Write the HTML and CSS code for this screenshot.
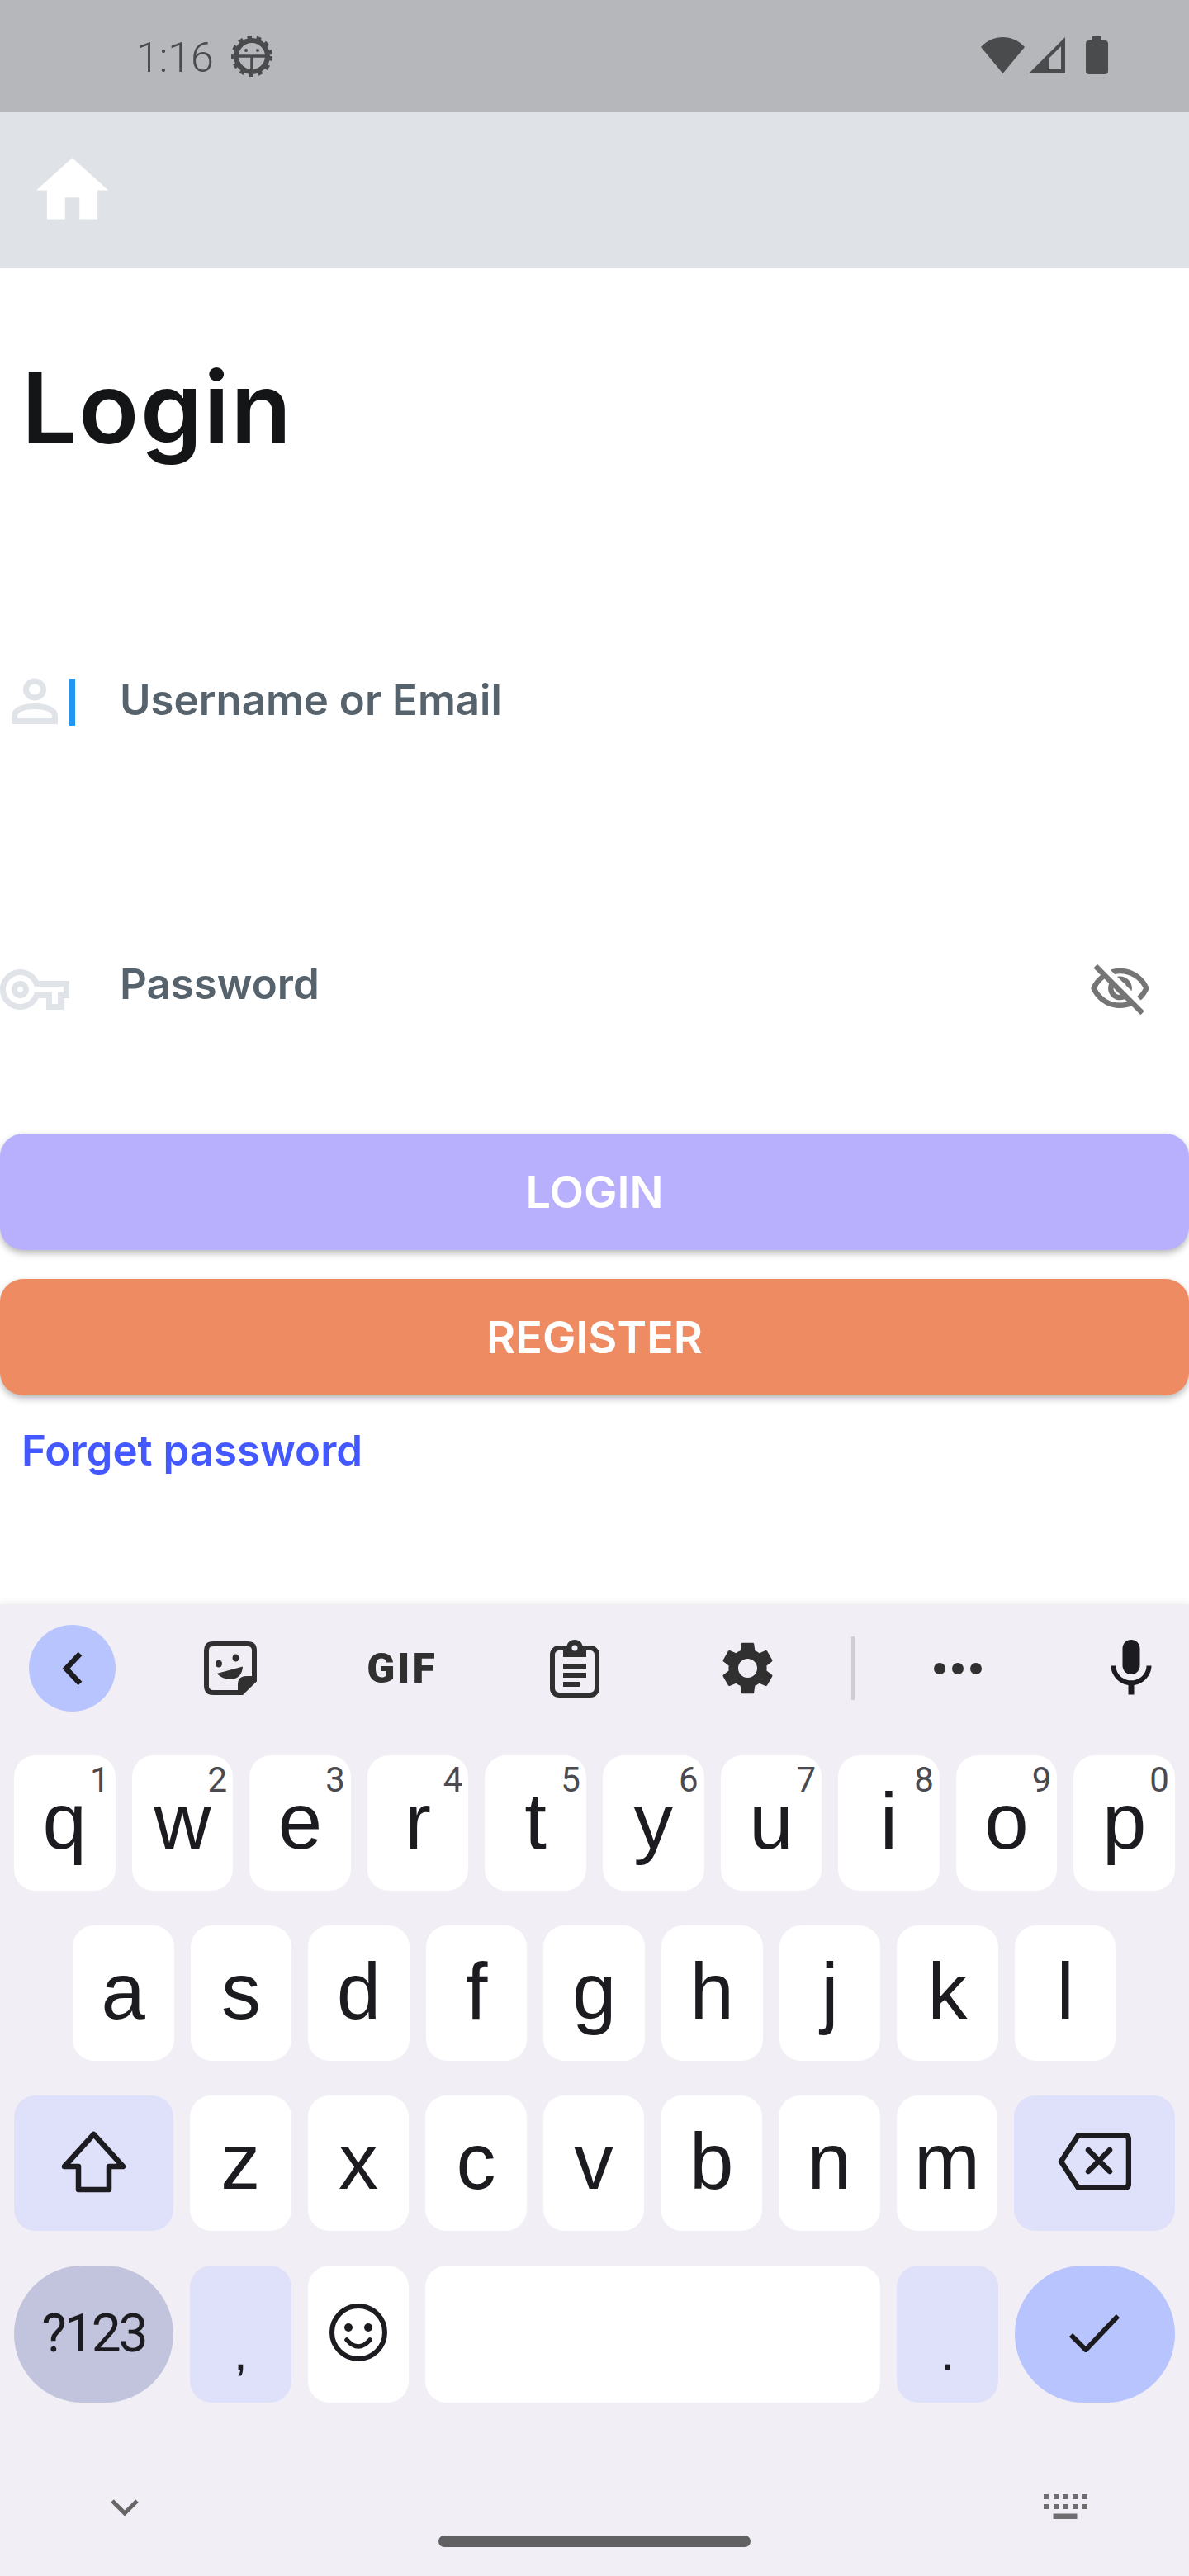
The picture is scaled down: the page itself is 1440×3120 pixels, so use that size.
FILE: index.html
```html
<!DOCTYPE html>
<html lang="en">
<head>
  <meta charset="UTF-8" />
  <meta name="viewport" content="width=device-width, initial-scale=1.0">
  <title>Login</title>
  <link rel="stylesheet" href="styles.css">
</head>
<body>

<!-- Barre d'etat -->
<div class="status-bar">
  <span class="status-time">1:16</span>
  <svg class="status-bug" width="50" height="50" viewBox="0 0 50 50">
    <circle cx="25" cy="25" r="19" fill="none" stroke="#4a4b4d" stroke-width="6"/>
    <circle cx="25" cy="25" r="22.5" fill="none" stroke="#4a4b4d" stroke-width="5" stroke-dasharray="5.5 5.6"/>
    <path d="M5 25H45M25 25V44" fill="none" stroke="#4a4b4d" stroke-width="3.5"/>
    <circle cx="18" cy="18" r="2" fill="#4a4b4d"/>
    <circle cx="32" cy="18" r="2" fill="#4a4b4d"/>
  </svg>
  <div class="status-icons">
    <svg width="53" height="44" viewBox="0 0 53 44"><path d="M0 12C14-4 39-4 53 12L26.5 44Z" fill="#4a4b4d"/></svg>
    <svg width="44" height="44" viewBox="0 0 44 44"><path fill-rule="evenodd" d="M44 0V44H0ZM39 11 24 26V39H39Z" fill="#4a4b4d"/></svg>
    <svg class="status-battery" width="27" height="46" viewBox="0 0 27 46"><path d="M8 0H19V5H23Q27 5 27 9V42Q27 46 23 46H4Q0 46 0 42V9Q0 5 4 5H8Z" fill="#4a4b4d"/></svg>
  </div>
</div>

<header class="app-header">
  <svg width="105" height="105" viewBox="0 0 24 24"><path d="M10 20v-6h4v6h5v-8h3L12 3 2 12h3v8z" fill="#fff"/></svg>
</header>

<main class="login">
  <h1 class="login-title">Login</h1>

  <div class="field field-user">
    <div class="field-slot">
      <svg width="56" height="56" viewBox="0 0 56 56" fill="none" stroke="#e0e3e7" stroke-width="7">
        <ellipse cx="28" cy="14" rx="10.5" ry="10"/>
        <path d="M3.5 52.5V46C3.5 38 16 34.500 28 34.500S52.500 38 52.500 46V52.500Z"/>
      </svg>
      <span class="cursor"></span>
    </div>
    <span class="field-label">Username or Email</span>
  </div>

  <div class="field field-pass">
    <div class="field-slot">
      <svg class="key-icon" width="84" height="49" viewBox="0 5 24 14"><path fill="#e0e3e7" d="M22 19h-6v-4h-2.680c-1.140 2.420-3.600 4-6.320 4-3.860 0-7-3.140-7-7s3.140-7 7-7c2.720 0 5.170 1.580 6.320 4H24v6h-2v4zm-4-2h2v-4h2v-2H11.940l-.23-.67C11.010 8.340 9.110 7 7 7c-2.760 0-5 2.240-5 5s2.240 5 5 5c2.110 0 4.010-1.340 4.710-3.330l.23-.67H18v4zM7 15c-1.650 0-3-1.350-3-3s1.350-3 3-3 3 1.350 3 3-1.350 3-3 3zm0-4c-.55 0-1 .45-1 1s.45 1 1 1 1-.45 1-1-.45-1-1-1z"/></svg>
    </div>
    <span class="field-label">Password</span>
    <svg class="eye-icon" width="77" height="77" viewBox="0 0 24 24"><path fill="#757575" d="M12 6c3.790 0 7.170 2.130 8.820 5.500-.59 1.220-1.420 2.270-2.410 3.120l1.410 1.410c1.390-1.230 2.490-2.770 3.180-4.530C21.270 7.110 17 4 12 4c-1.270 0-2.490.2-3.640.57l1.650 1.650C10.660 6.090 11.320 6 12 6zm-1.070 1.140L13 9.210c.57.25 1.030.71 1.280 1.280l2.070 2.070c.08-.34.14-.7.14-1.070C16.500 9.010 14.480 7 12 7c-.37 0-.72.05-1.070.14zM2.010 3.870l2.680 2.680C3.060 7.830 1.770 9.530 1 11.500 2.730 15.890 7 19 12 19c1.520 0 2.980-.29 4.320-.82l3.420 3.420 1.410-1.410L3.420 2.450 2.010 3.870zm7.500 7.500l2.610 2.610c-.04.01-.08.02-.12.02-1.380 0-2.500-1.120-2.500-2.500 0-.05.01-.08.01-.13zm-3.400-3.400l1.750 1.750c-.23.55-.36 1.150-.36 1.780 0 2.480 2.020 4.500 4.500 4.500.63 0 1.230-.13 1.770-.36l.98.98c-.88.24-1.800.38-2.750.38-3.790 0-7.170-2.130-8.820-5.500.7-1.430 1.720-2.610 2.930-3.530z"/></svg>
  </div>

  <button class="btn btn-login">LOGIN</button>
  <button class="btn btn-register">REGISTER</button>
  <a class="forget-link">Forget password</a>
</main>

<!-- Clavier -->
<section class="keyboard">
  <div class="toolbar">
    <span class="tool-back">
      <svg width="26" height="42" viewBox="0 0 26 42"><path d="M23 3 6 21 23 39" fill="none" stroke="#1c1b1f" stroke-width="6.500"/></svg>
    </span>
    <svg width="64" height="65" viewBox="0 0 64 65">
      <path d="M11 3H53Q61 3 61 11V47L45 62H11Q3 62 3 54V11Q3 3 11 3Z" fill="none" stroke="#303030" stroke-width="6"/>
      <path d="M41 63V52Q41 42 52 42H64V48L47 65Z" fill="#303030"/>
      <ellipse cx="18" cy="27" rx="4" ry="4.500" fill="#303030"/>
      <ellipse cx="38.500" cy="20" rx="4" ry="4.500" fill="#303030"/>
      <path d="M15.500 39 47 30.500Q46 46 31 46 23 46 15.500 39Z" fill="#303030"/>
    </svg>
    <span class="tool-gif">GIF</span>
    <svg width="60" height="70" viewBox="0 0 60 70">
      <rect x="3" y="10" width="54" height="57" rx="8" fill="none" stroke="#303030" stroke-width="6"/>
      <path d="M16 7H20.500A10 10 0 0 1 39.500 7H44V21H16Z" fill="#303030"/>
      <circle cx="30" cy="10" r="3.500" fill="#f1eff5"/>
      <path d="M16 29H44V35H16ZM16 40H44V46H16ZM16 51H36V57H16Z" fill="#303030"/>
    </svg>
    <svg width="77" height="77" viewBox="0 0 24 24"><path fill="#303030" d="M19.140 12.940c.04-.3.06-.61.06-.94 0-.32-.02-.64-.07-.94l2.030-1.580c.18-.14.23-.41.12-.61l-1.920-3.320c-.12-.22-.37-.29-.59-.22l-2.390.96c-.5-.38-1.030-.7-1.620-.94l-.36-2.540c-.04-.24-.24-.41-.48-.41h-3.840c-.24 0-.43.17-.47.41l-.36 2.540c-.59.24-1.130.57-1.620.94l-2.390-.96c-.22-.08-.47 0-.59.22L2.740 8.870c-.12.21-.08.47.12.61l2.030 1.580c-.05.3-.09.63-.09.94s.02.64.07.94l-2.030 1.580c-.18.14-.23.41-.12.61l1.920 3.320c.12.22.37.29.59.22l2.390-.96c.5.38 1.030.7 1.620.94l.36 2.540c.05.24.24.41.48.41h3.840c.24 0 .44-.17.47-.41l.36-2.540c.59-.24 1.130-.56 1.620-.94l2.390.96c.22.08.47 0 .59-.22l1.920-3.320c.12-.22.07-.47-.12-.61l-2.010-1.580zM12 15.600c-1.980 0-3.600-1.620-3.600-3.600s1.620-3.600 3.600-3.600 3.600 1.620 3.600 3.600-1.620 3.600-3.600 3.600z"/></svg>
    <span class="tool-divider"></span>
    <svg width="58" height="14" viewBox="0 0 58 14" fill="#303030"><circle cx="7" cy="7" r="7"/><circle cx="29" cy="7" r="7"/><circle cx="51" cy="7" r="7"/></svg>
    <svg class="tool-mic" width="84" height="84" viewBox="0 0 24 24"><path fill="#1c1b1f" d="M12 14c1.660 0 3-1.340 3-3V5c0-1.660-1.340-3-3-3S9 3.340 9 5v6c0 1.660 1.340 3 3 3zm5.300-3c0 3-2.540 5.100-5.300 5.100S6.700 14 6.700 11H5c0 3.410 2.720 6.230 6 6.720V21h2v-3.280c3.280-.48 6-3.300 6-6.720h-1.700z"/></svg>
  </div>

  <div class="key-row">
    <div class="key">q<sup class="key-num">1</sup></div>
    <div class="key">w<sup class="key-num">2</sup></div>
    <div class="key">e<sup class="key-num">3</sup></div>
    <div class="key">r<sup class="key-num">4</sup></div>
    <div class="key">t<sup class="key-num">5</sup></div>
    <div class="key">y<sup class="key-num">6</sup></div>
    <div class="key">u<sup class="key-num">7</sup></div>
    <div class="key">i<sup class="key-num">8</sup></div>
    <div class="key">o<sup class="key-num">9</sup></div>
    <div class="key">p<sup class="key-num">0</sup></div>
  </div>

  <div class="key-row key-row-home">
    <div class="key">a</div>
    <div class="key">s</div>
    <div class="key">d</div>
    <div class="key">f</div>
    <div class="key">g</div>
    <div class="key">h</div>
    <div class="key">j</div>
    <div class="key">k</div>
    <div class="key">l</div>
  </div>

  <div class="key-row">
    <div class="key key-wide key-soft">
      <svg width="79" height="76" viewBox="0 0 79 76"><path d="M39.500 5 75 44H58V72H21V44H4Z" fill="none" stroke="#1c1b1f" stroke-width="6.500" stroke-linejoin="round"/></svg>
    </div>
    <div class="key">z</div>
    <div class="key">x</div>
    <div class="key">c</div>
    <div class="key">v</div>
    <div class="key">b</div>
    <div class="key">n</div>
    <div class="key">m</div>
    <div class="key key-fill key-soft">
      <svg width="89" height="70" viewBox="0 0 89 70" fill="none" stroke="#1c1b1f" stroke-width="6.500" stroke-linejoin="round" stroke-linecap="round">
        <path d="M25 3H80Q86 3 86 9V61Q86 67 80 67H25L4 35Z"/>
        <path d="M37 21 63 47M63 21 37 47"/>
      </svg>
    </div>
  </div>

  <div class="key-row key-row-last">
    <div class="key key-wide key-pill key-symbols">?123</div>
    <div class="key key-soft key-punct">,</div>
    <div class="key">
      <svg width="70" height="70" viewBox="0 0 70 70">
        <circle cx="35" cy="35" r="32" fill="none" stroke="#1c1b1f" stroke-width="6"/>
        <circle cx="23" cy="29" r="5" fill="#1c1b1f"/>
        <circle cx="47" cy="29" r="5" fill="#1c1b1f"/>
        <path d="M21 44Q35 60 49 44" fill="none" stroke="#1c1b1f" stroke-width="5.500" stroke-linecap="round"/>
      </svg>
    </div>
    <div class="key key-space"></div>
    <div class="key key-soft key-punct">.</div>
    <div class="key key-fill key-pill key-enter">
      <svg width="61" height="47" viewBox="0 0 61 47"><path d="M2 26 20 44 59 3" fill="none" stroke="#1c1b1f" stroke-width="6"/></svg>
    </div>
  </div>

  <div class="nav-row">
    <svg class="nav-down" width="34" height="20" viewBox="0 0 34 20"><path d="M2 2 17 17 32 2" fill="none" stroke="#666" stroke-width="5"/></svg>
    <svg width="53" height="30" viewBox="0 0 53 30" fill="#6e6e70">
      <path d="M0 0h6v6H0zM12 0h6v6h-6zM23.500 0h6v6h-6zM35 0h6v6h-6zM47 0h6v6h-6z"/>
      <path d="M0 12h6v6H0zM12 12h6v6h-6zM23.500 12h6v6h-6zM35 12h6v6h-6zM47 12h6v6h-6z"/>
      <path d="M11.500 23.500h29V30h-29z"/>
    </svg>
  </div>
  <div class="home-bar"></div>
</section>

</body>
</html>
```

FILE: styles.css
```css
* {
  box-sizing: border-box;
}

body {
  margin: 0;
  width: 1440px;
  height: 3120px;
  display: flex;
  flex-direction: column;
  background: #fff;
  font-family: Inter, 'Noto Sans', sans-serif;
  overflow: hidden;
}

/* status bar */
.status-bar {
  flex: 0 0 136px;
  display: flex;
  align-items: center;
  padding: 0 98px 0 165px;
  background: #b6b7ba;
  color: #4a4b4d;
}

.status-time {
  width: 115px;
  margin-top: 4px;
  font-family: Roboto, sans-serif;
  font-size: 50px;
  font-weight: 300;
}

.status-icons {
  display: flex;
  align-items: center;
  gap: 5px;
  margin-left: auto;
  margin-top: -2px;
}

.status-battery {
  margin-left: 20px;
}

.app-header {
  flex: 0 0 188px;
  display: flex;
  align-items: center;
  padding-left: 35px;
  background: #dfe2e6;
}

/* form */
.login {
  flex: 1;
  display: flex;
  flex-direction: column;
  padding-top: 110px;
}

.login-title {
  height: 120px;
  margin: 0 0 0 26px;
  font-size: 120px;
  font-weight: 600;
  line-height: 1;
  letter-spacing: 1.500px;
  color: #131517;
}

.field {
  display: flex;
  align-items: flex-start;
}

.field-user {
  height: 339px;
  margin-top: 267px;
}

.field-pass {
  height: 213px;
}

.field-slot {
  flex: 0 0 145px;
  display: flex;
  padding-left: 14px;
}

.cursor {
  width: 7px;
  height: 57px;
  margin: 1px 0 0 14px;
  background: #2196f3;
}

.key-icon {
  margin: 14px 0 0 -14px;
}

.field-label {
  margin-top: 3px;
  font-size: 51px;
  font-weight: 600;
  line-height: 48px;
  color: #56636d;
}

.field-pass .field-label {
  margin-top: 8px;
}

.eye-icon {
  margin-left: auto;
  margin-right: 45px;
}

.btn {
  height: 141px;
  flex: none;
  border: none;
  border-radius: 28px;
  font-family: inherit;
  font-size: 54px;
  font-weight: 600;
  color: #fff;
  box-shadow: 0 4px 8px rgba(0, 0, 0, 0.28);
}

.btn-login {
  background: #b8b0fd;
}

.btn-register {
  margin-top: 35px;
  background: #ef8b62;
}

.forget-link {
  margin: 43px 0 0 26px;
  font-size: 51px;
  font-weight: 600;
  line-height: 48px;
  color: #4358ff;
}

/* keyboard */
.keyboard {
  flex: 0 0 1177px;
  padding-top: 25px;
  background: #f1eff5;
  box-shadow: 0 -3px 8px rgba(0, 0, 0, 0.05);
  font-family: 'Liberation Sans', sans-serif;
  color: #1c1b1f;
}

.toolbar {
  display: grid;
  grid-template-columns: 174px 210px 206px 212px 206px 50px 204px 1fr;
  align-items: center;
  justify-items: center;
  height: 105px;
  margin-bottom: 53px;
}

.tool-back {
  width: 105px;
  height: 105px;
  display: flex;
  align-items: center;
  justify-content: center;
  border-radius: 50%;
  background: #b8c4fe;
}

.tool-gif {
  font-family: Roboto, sans-serif;
  font-size: 50px;
  font-weight: 900;
  letter-spacing: 3px;
  color: #303030;
}

.tool-divider {
  width: 4px;
  height: 77px;
  background: #cfcfd3;
}

.tool-mic {
  justify-self: end;
  margin-right: 28px;
}

.key-row {
  display: flex;
  gap: 20px;
  height: 164px;
  margin-bottom: 42px;
  padding: 0 17px;
}

.key-row-home {
  padding-left: 88px;
}

.key-row-last {
  height: 166px;
  margin-bottom: 0;
}

.key {
  position: relative;
  flex: 0 0 122.600px;
  display: flex;
  align-items: center;
  justify-content: center;
  padding-bottom: 4px;
  border-radius: 26px;
  background: #fff;
  font-size: 96px;
  line-height: 1;
}

.key-num {
  position: absolute;
  top: 9px;
  right: 7px;
  font-family: Roboto, sans-serif;
  font-size: 42px;
  line-height: 1;
  color: #4a4a4f;
}

.key-soft {
  background: #dfe0fa;
}

.key-wide {
  flex-basis: 193px;
}

.key-fill {
  flex: 1;
}

.key-space {
  flex-basis: 551px;
}

.key-pill {
  border-radius: 83px;
}

.key-symbols {
  padding-bottom: 0;
  background: #c2c4de;
  font-family: Roboto, sans-serif;
  font-size: 64px;
  letter-spacing: -3px;
}

.key-punct {
  align-items: flex-start;
  padding-top: 76px;
  font-size: 60px;
}

.key-enter {
  background: #b8c4fe;
}

.nav-row {
  display: flex;
  justify-content: space-between;
  align-items: flex-start;
  padding: 111px 123px 0 134px;
}

.nav-down {
  margin-top: 6px;
}

.home-bar {
  width: 378px;
  height: 14px;
  margin: 20px auto 0;
  border-radius: 7px;
  background: #616164;
}
```
